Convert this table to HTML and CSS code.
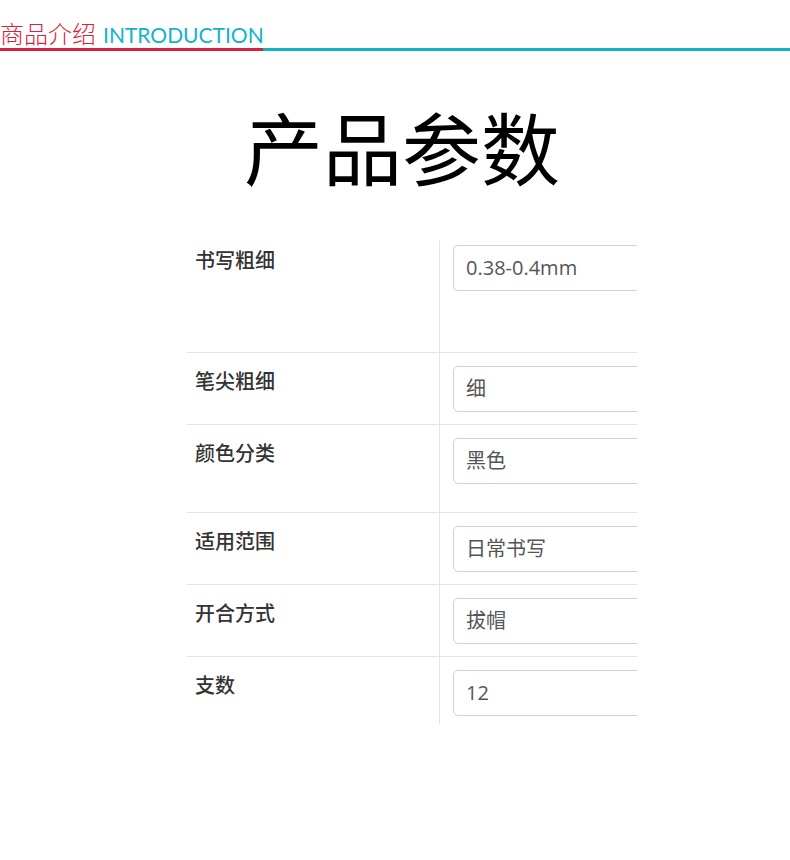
FILE: index.html
```html
<!DOCTYPE html>
<html lang="zh-CN">
<head>
    <meta charset="UTF-8">
    <meta name="viewport" content="width=device-width, initial-scale=1.0">
    <title>商品介绍 - 产品参数</title>
    <link rel="stylesheet" href="styles.css">
</head>
<body>
    <header class="intro-header">
        <div class="intro-title">
            <span class="intro-cn">商品介绍</span>
            <span class="intro-en">INTRODUCTION</span>
        </div>
        <div class="intro-rule">
            <span class="rule-red"></span>
            <span class="rule-cyan"></span>
        </div>
    </header>

    <h1 class="params-title">产品参数</h1>

    <div class="params-table">
        <div class="param-row row-first">
            <div class="param-label">书写粗细</div>
            <div class="param-value"><div class="value-box">0.38-0.4mm</div></div>
        </div>
        <div class="param-row">
            <div class="param-label">笔尖粗细</div>
            <div class="param-value"><div class="value-box">细</div></div>
        </div>
        <div class="param-row row-tall">
            <div class="param-label">颜色分类</div>
            <div class="param-value"><div class="value-box">黑色</div></div>
        </div>
        <div class="param-row">
            <div class="param-label">适用范围</div>
            <div class="param-value"><div class="value-box">日常书写</div></div>
        </div>
        <div class="param-row">
            <div class="param-label">开合方式</div>
            <div class="param-value"><div class="value-box">拔帽</div></div>
        </div>
        <div class="param-row row-last">
            <div class="param-label">支数</div>
            <div class="param-value"><div class="value-box">12</div></div>
        </div>
    </div>
</body>
</html>
```

FILE: styles.css
```css
:root {
    --font-cjk: "Noto Sans CJK SC", sans-serif;
    --font-latin: "Open Sans", "Noto Sans CJK SC", sans-serif;
    --color-red: #dc1f3c;
    --color-cyan: #12b3c6;
    --color-line: #e3e3e6;
    --color-text: #333333;
}
body {
    margin: 0;
    background: #ffffff;
    color: var(--color-text);
    font-family: var(--font-cjk);
}

/* ヘッダー */
.intro-header {
    padding-top: 18px;
}
.intro-title {
    display: flex;
    align-items: baseline;
    height: 30px;
}
.intro-cn {
    font-size: 24px;
    line-height: 30px;
    font-weight: 300;
    color: var(--color-red);
}
.intro-en {
    font-family: Lato, sans-serif;
    font-size: 21px;
    line-height: 30px;
    color: var(--color-cyan);
    margin-left: 7px;
}
.intro-rule {
    display: flex;
    height: 3px;
}
.rule-red {
    width: 263px;
    background: var(--color-red);
}
.rule-cyan {
    flex: 1;
    background: var(--color-cyan);
}

/* タイトル */
.params-title {
    margin: 45px 0 0;
    padding-left: 14px;
    text-align: center;
    font-size: 79px;
    line-height: 100px;
    font-weight: 400;
    color: #000000;
}

/* 表 */
.params-table {
    width: 450px;
    margin: 45px 0 0 187px;
    overflow: hidden;
}
.param-row {
    display: flex;
    border-top: 1px solid var(--color-line);
}
.param-row.row-first {
    border-top: none;
}
.param-label {
    width: 244px;
    flex-shrink: 0;
    padding: 16px 0 0 8px;
    font-size: 20px;
    line-height: 24px;
    font-weight: 500;
    color: var(--color-text);
}
.param-value {
    flex: 1;
    border-left: 1px solid var(--color-line);
    padding: 13px 0 12px 13px;
}
.row-first .param-label { padding-top: 7px; }
.row-first .param-value { padding-top: 4px; padding-bottom: 61px; }
.row-tall .param-value { padding-bottom: 28px; }
.row-last .param-value { padding-bottom: 8px; }

.value-box {
    width: 320px;
    height: 44px;
    box-sizing: content-box;
    padding: 0 12px;
    border: 1px solid #cfd2d6;
    border-radius: 5px;
    font-family: var(--font-latin);
    font-size: 20px;
    line-height: 44px;
    color: #555555;
    white-space: nowrap;
}
```
